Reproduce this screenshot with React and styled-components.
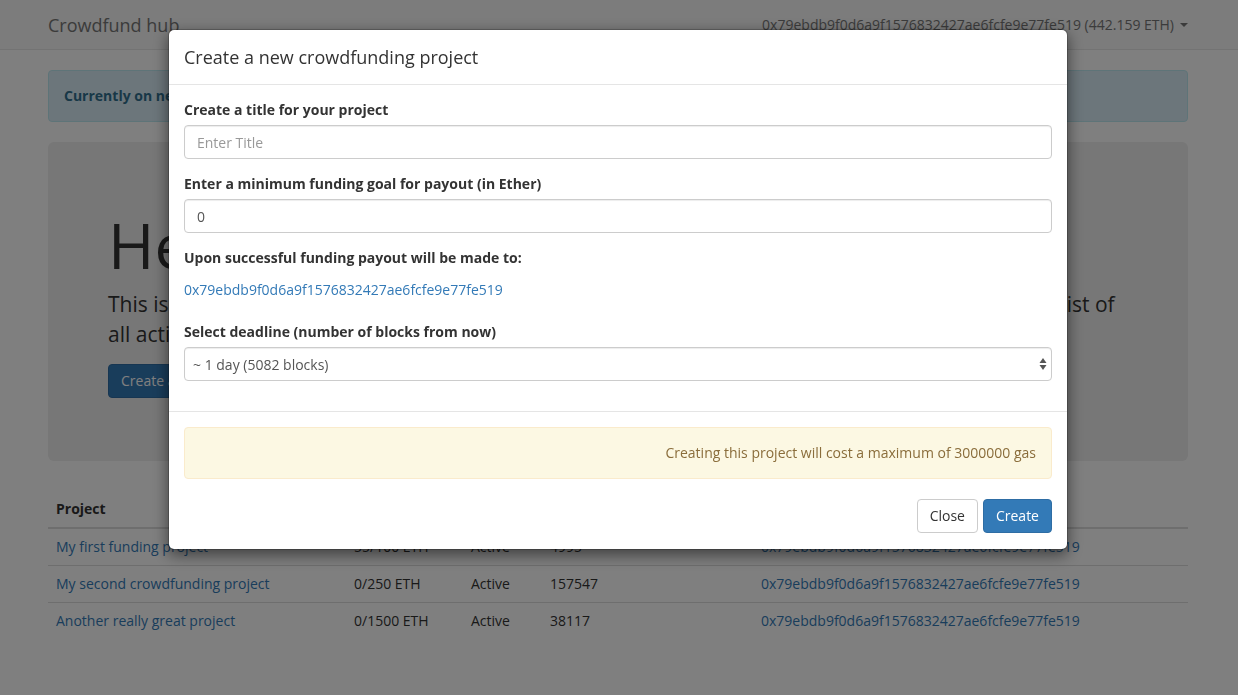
import * as React from 'react'
import styled, { createGlobalStyle } from 'styled-components'

const GlobalStyle = createGlobalStyle`
    * {
        box-sizing: border-box;
    }
    html, body {
        margin: 0;
        padding: 0;
    }
    body {
        font-family: "Open Sans", "Liberation Sans", Arial, sans-serif;
        font-size: 14px;
        line-height: 1.42857;
        color: #333;
        background: #fff;
        overflow: hidden;
    }
`

const ADDRESS = '0x79ebdb9f0d6a9f1576832427ae6fcfe9e77fe519'

const projects = [
    { title: 'My first funding project', funded: '55/100 ETH', status: 'Active', deadline: '4995' },
    { title: 'My second crowdfunding project', funded: '0/250 ETH', status: 'Active', deadline: '157547' },
    { title: 'Another really great project', funded: '0/1500 ETH', status: 'Active', deadline: '38117' },
]

const Navbar = styled.nav`
    height: 50px;
    background: #f8f8f8;
    border-bottom: 1px solid #e7e7e7;
    margin-bottom: 20px;
`

// reference sits one pixel left of a centred 1170px container
const Container = styled.div`
    width: 1170px;
    margin: 0 auto;
    padding: 0 16px 0 14px;
`

const NavInner = styled(Container)`
    display: flex;
    justify-content: space-between;
    align-items: center;
    height: 50px;
`

const Brand = styled.a`
    font-size: 18px;
    line-height: 20px;
    color: #777;
    text-decoration: none;
`

const AccountLink = styled.a`
    display: flex;
    align-items: center;
    gap: 6px;
    color: #777;
    font-size: 14px;
    line-height: 20px;
    text-decoration: none;
`

const Caret = styled.span`
    display: inline-block;
    width: 0;
    height: 0;
    border-top: 4px solid #777;
    border-left: 4px solid transparent;
    border-right: 4px solid transparent;
`

const Alert = styled.div`
    padding: 15px;
    border: 1px solid ${p => (p.$variant === 'warning' ? '#faebcc' : '#bce8f1')};
    background: ${p => (p.$variant === 'warning' ? '#fcf8e3' : '#d9edf7')};
    color: ${p => (p.$variant === 'warning' ? '#8a6d3b' : '#31708f')};
    border-radius: 4px;
    margin-bottom: 20px;
    line-height: 20px;
    text-align: ${p => (p.$align ? p.$align : 'left')};
`

const Jumbotron = styled.div`
    background: #eee;
    border-radius: 6px;
    padding: 48px 60px 63px;
    margin-bottom: 30px;

    h1 {
        font-size: 63px;
        font-weight: 500;
        line-height: 1.1;
        margin: 20px 0 10px;
        color: #333;
    }

    p {
        font-size: 21px;
        line-height: 30px;
        margin: 0 0 15px;
        white-space: nowrap;
    }
`

const Button = styled.button`
    font-family: inherit;
    font-size: 14px;
    line-height: 20px;
    padding: 6px 12px;
    border-radius: 4px;
    border: 1px solid ${p => (p.$primary ? '#2e6da4' : '#ccc')};
    background: ${p => (p.$primary ? '#337ab7' : '#fff')};
    color: ${p => (p.$primary ? '#fff' : '#333')};
    cursor: pointer;
`

const Table = styled.table`
    width: 100%;
    border-collapse: collapse;
    table-layout: fixed;

    th, td {
        padding: 8px;
        line-height: 20px;
        text-align: left;
        white-space: nowrap;
    }

    th {
        font-weight: bold;
        border-bottom: 2px solid #ddd;
    }

    td {
        border-top: 1px solid #ddd;
    }
`

const Link = styled.a`
    color: #337ab7;
    text-decoration: none;
`

const Backdrop = styled.div`
    position: fixed;
    inset: 0;
    background: rgba(0, 0, 0, 0.5);
`

const ModalLayer = styled.div`
    position: fixed;
    inset: 0;
    overflow: hidden;
`

const Dialog = styled.div`
    width: 900px;
    margin: 29px 0 29px calc(50% - 451px);
    background: #fff;
    border: 1px solid rgba(0, 0, 0, 0.2);
    border-radius: 6px;
    box-shadow: 0 5px 15px rgba(0, 0, 0, 0.5);
    background-clip: padding-box;
`

const ModalHeader = styled.div`
    padding: 15px;
    border-bottom: 1px solid #e5e5e5;
`

const ModalTitle = styled.h4`
    margin: 0;
    font-size: 18px;
    font-weight: 500;
    line-height: 24px;
`

const ModalBody = styled.div`
    padding: 15px;
`

const ModalFooter = styled.div`
    padding: 15px 15px 16px;
    border-top: 1px solid #e5e5e5;
    text-align: right;
`

const FooterButtons = styled.div`
    display: flex;
    justify-content: flex-end;
    gap: 5px;
`

const FormGroup = styled.div`
    margin-bottom: 15px;
`

const Label = styled.label`
    display: block;
    font-weight: bold;
    margin-bottom: 5px;
    line-height: 20px;
`

const Input = styled.input`
    display: block;
    width: 100%;
    height: 34px;
    padding: 6px 12px;
    font-family: inherit;
    font-size: 14px;
    line-height: 20px;
    color: #555;
    background: #fff;
    border: 1px solid #ccc;
    border-radius: 4px;
    box-shadow: inset 0 1px 1px rgba(0, 0, 0, 0.075);

    &::placeholder {
        color: #999;
    }
`

const StaticText = styled.div`
    padding: 7px 0;
    min-height: 34px;
    line-height: 20px;
`

const SelectWrap = styled.div`
    position: relative;
`

const Select = styled.select`
    display: block;
    width: 100%;
    height: 34px;
    padding: 6px 8px;
    font-family: inherit;
    font-size: 14px;
    color: #555;
    background: #fff;
    border: 1px solid #ccc;
    border-radius: 4px;
    appearance: none;
    box-shadow: inset 0 1px 1px rgba(0, 0, 0, 0.075);
`

const SelectArrows = styled.svg`
    position: absolute;
    right: 5px;
    top: 11px;
    pointer-events: none;
`

export default function App() {
    return (
        <>
            <GlobalStyle />
            <Navbar>
                <NavInner>
                    <Brand href="#">Crowdfund hub</Brand>
                    <AccountLink href="#">
                        {ADDRESS} (442.159 ETH)
                        <Caret />
                    </AccountLink>
                </NavInner>
            </Navbar>
            <Container>
                <Alert>
                    <strong>Currently on network: Ethereum testnet (Ropsten)</strong>
                </Alert>
                <Jumbotron>
                    <h1>Hello, backer!</h1>
                    <p>
                        This is a decentralized crowdfunding hub on the Ethereum blockchain. Below you will find the full list of
                        <br />
                        all active projects that you can fund.
                    </p>
                    <Button $primary>Create a new project</Button>
                </Jumbotron>
                <Table>
                    <colgroup>
                        <col style={{ width: 298 }} />
                        <col style={{ width: 117 }} />
                        <col style={{ width: 79 }} />
                        <col style={{ width: 211 }} />
                        <col />
                    </colgroup>
                    <thead>
                        <tr>
                            <th>Project</th>
                            <th>Funded</th>
                            <th>Status</th>
                            <th>Deadline</th>
                            <th>Address</th>
                        </tr>
                    </thead>
                    <tbody>
                        {projects.map(p => (
                            <tr key={p.title}>
                                <td>
                                    <Link href="#">{p.title}</Link>
                                </td>
                                <td>{p.funded}</td>
                                <td>{p.status}</td>
                                <td>{p.deadline}</td>
                                <td>
                                    <Link href="#">{ADDRESS}</Link>
                                </td>
                            </tr>
                        ))}
                    </tbody>
                </Table>
            </Container>

            <Backdrop />
            <ModalLayer>
                <Dialog>
                    <ModalHeader>
                        <ModalTitle>Create a new crowdfunding project</ModalTitle>
                    </ModalHeader>
                    <ModalBody>
                        <FormGroup>
                            <Label htmlFor="title">Create a title for your project</Label>
                            <Input id="title" type="text" placeholder="Enter Title" />
                        </FormGroup>
                        <FormGroup>
                            <Label htmlFor="goal">Enter a minimum funding goal for payout (in Ether)</Label>
                            <Input id="goal" type="text" defaultValue="0" />
                        </FormGroup>
                        <FormGroup>
                            <Label>Upon successful funding payout will be made to:</Label>
                            <StaticText>
                                <Link href="#">{ADDRESS}</Link>
                            </StaticText>
                        </FormGroup>
                        <FormGroup>
                            <Label htmlFor="deadline">Select deadline (number of blocks from now)</Label>
                            <SelectWrap>
                                <Select id="deadline" defaultValue="5082">
                                    <option value="5082">~ 1 day (5082 blocks)</option>
                                    <option value="35574">~ 1 week (35574 blocks)</option>
                                    <option value="152460">~ 1 month (152460 blocks)</option>
                                </Select>
                                <SelectArrows width="8" height="12" viewBox="0 0 8 12">
                                    <path d="M4 0 L7.5 5 H0.5 Z" fill="#555" />
                                    <path d="M4 12 L7.5 7 H0.5 Z" fill="#555" />
                                </SelectArrows>
                            </SelectWrap>
                        </FormGroup>
                    </ModalBody>
                    <ModalFooter>
                        <Alert $variant="warning" $align="right">
                            Creating this project will cost a maximum of 3000000 gas
                        </Alert>
                        <FooterButtons>
                            <Button>Close</Button>
                            <Button $primary>Create</Button>
                        </FooterButtons>
                    </ModalFooter>
                </Dialog>
            </ModalLayer>
        </>
    )
}
